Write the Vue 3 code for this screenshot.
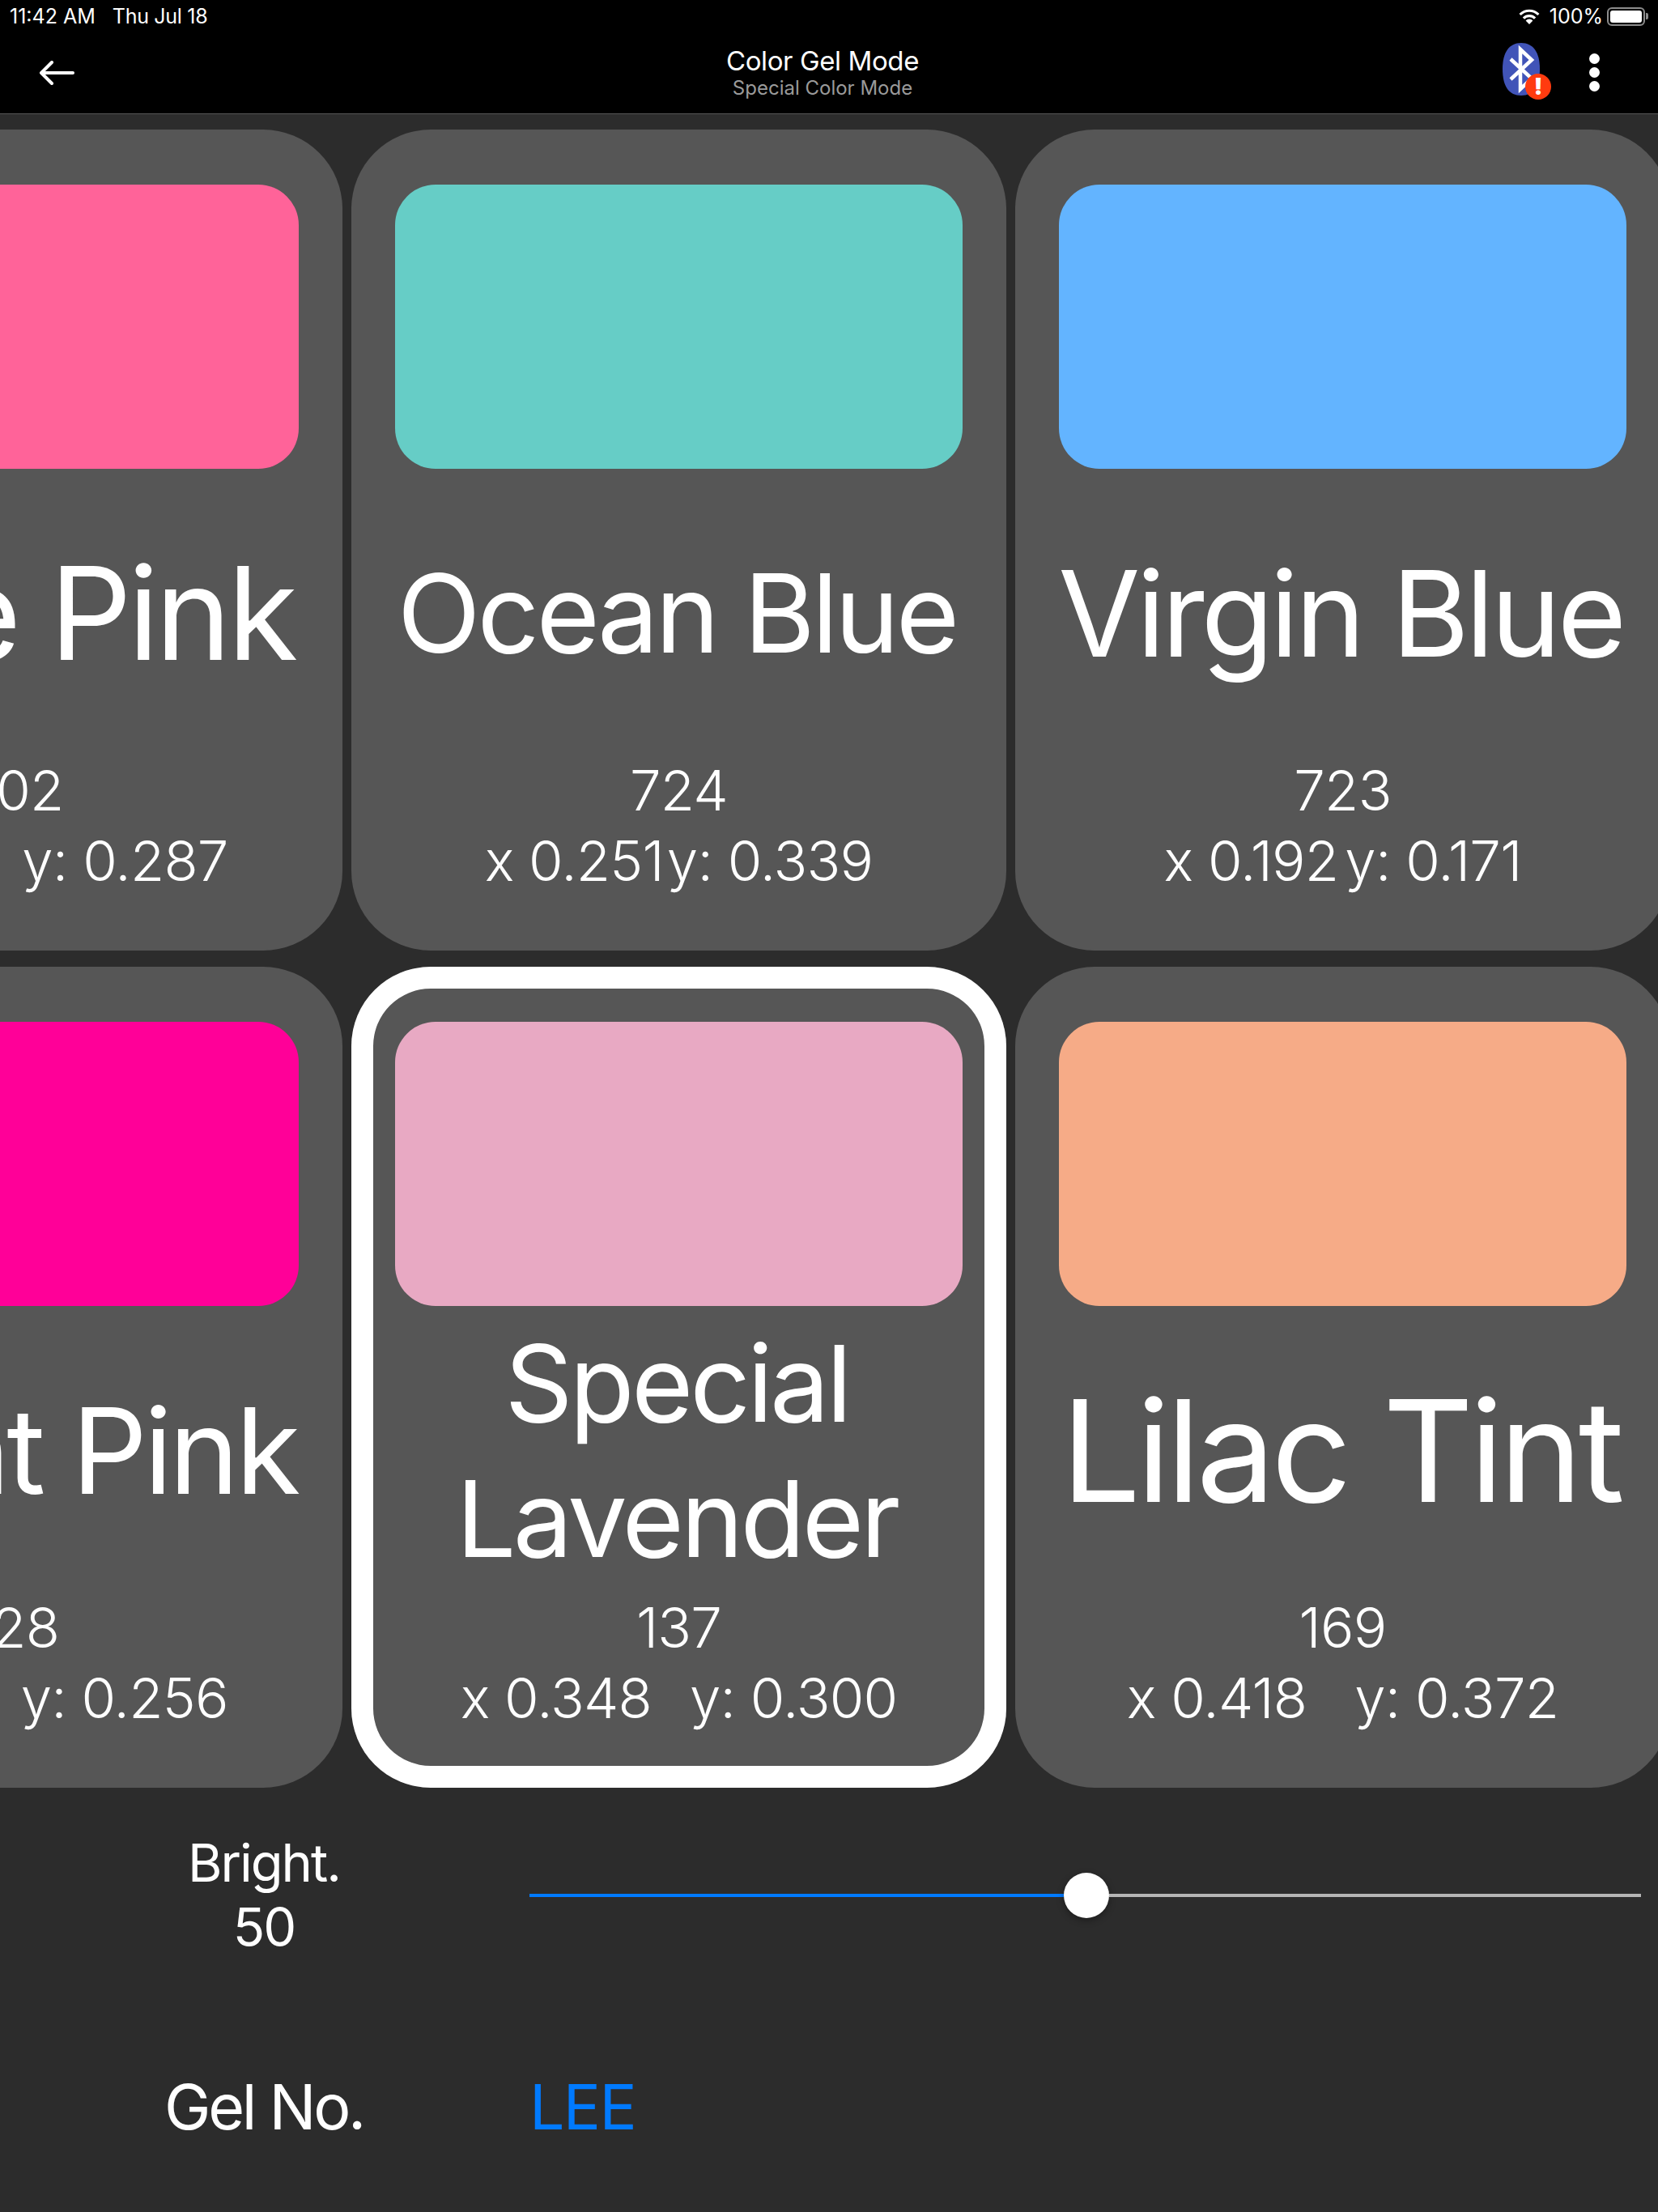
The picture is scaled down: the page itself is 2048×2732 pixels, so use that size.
<template>
  <div class="page">
    <div class="status-bar">
      <div class="status-left"><span>11:42 AM</span><span class="date">Thu Jul 18</span></div>
      <div class="status-right">
        <svg class="wifi" width="30" height="22" viewBox="0 0 30 22">
          <path d="M15 21l-4.4-4.6a6.2 6.2 0 0 1 8.8 0z" fill="#fff" />
          <path d="M7.9 13.6a10 10 0 0 1 14.2 0" fill="none" stroke="#fff" stroke-width="3.2" />
          <path d="M3.6 9a16 16 0 0 1 22.8 0" fill="none" stroke="#fff" stroke-width="3.2" />
        </svg>
        <span class="level">100%</span>
        <div class="battery"><div class="battery-fill"></div></div>
        <div class="battery-nub"></div>
      </div>
    </div>

    <header class="nav">
      <button type="button" class="back" aria-label="Back">
        <svg width="44" height="30" viewBox="0 0 44 30">
          <path d="M42 15H3M16 2L3 15l13 13" fill="none" stroke="#fff" stroke-width="4" stroke-linecap="round" stroke-linejoin="round" />
        </svg>
      </button>
      <div class="title">
        <div class="title-main">Color Gel Mode</div>
        <div class="title-sub">Special Color Mode</div>
      </div>
      <div class="actions">
        <div class="bt">
          <svg width="62" height="68" viewBox="0 0 62 68">
            <path d="M23 0C38 0 46 12 46 32 46 54 38 65 23 65 8 65 0 54 0 32 0 12 8 0 23 0z" fill="#4154b8" />
            <path d="M10 20L36 44 22 57V8L36 21 10 45" fill="none" stroke="#fff" stroke-width="4.5" />
          </svg>
          <div class="bt-badge">!</div>
        </div>
        <div class="dots"><i></i><i></i><i></i></div>
      </div>
    </header>

    <main class="grid">
      <div v-for="gel in gels" :key="gel.name" class="card" :class="{ selected: gel.selected }">
        <div class="swatch" :style="{ background: gel.color }"></div>
        <div class="name" :style="{ fontSize: gel.size + 'px' }">
          <div v-for="line in gel.name.split('|')" :key="line">{{ line }}</div>
        </div>
        <div class="info">
          <div>{{ gel.no }}</div>
          <div class="coords" :style="{ gap: gel.gap + 'px' }"><span>x {{ gel.x }}</span><span>y: {{ gel.y }}</span></div>
        </div>
      </div>
    </main>

    <section class="controls">
      <div class="row bright">
        <div class="label small">Bright.<br />50</div>
        <div class="slider">
          <div class="track-on"></div>
          <div class="thumb"></div>
          <div class="track-off"></div>
        </div>
      </div>
      <div class="row gel-no">
        <div class="label">Gel No.</div>
        <div class="lee">LEE</div>
      </div>
    </section>
  </div>
</template>

<script setup>
const gels = [
  { name: 'Rose Pink', size: 159, no: '702', x: '0.442', y: '0.287', color: '#ff6399', gap: 32 },
  { name: 'Ocean Blue', size: 134.5, no: '724', x: '0.251', y: '0.339', color: '#66cdc6', gap: 4 },
  { name: 'Virgin Blue', size: 146.5, no: '723', x: '0.192', y: '0.171', color: '#63b4ff', gap: 8 },
  { name: 'Bright Pink', size: 146.5, no: '128', x: '0.460', y: '0.256', color: '#ff0098', gap: 32 },
  { name: 'Special|Lavender', size: 131, no: '137', x: '0.348', y: '0.300', color: '#e8a9c3', gap: 47, selected: true },
  { name: 'Lilac Tint', size: 174, no: '169', x: '0.418', y: '0.372', color: '#f6ab87', gap: 59 }
];
</script>

<style>
html, body {
  margin: 0;
  background: #2c2c2c;
}
</style>

<style scoped>
.page {
  width: 2048px;
  height: 2732px;
  overflow: hidden;
  background: #2c2c2c;
  color: #fff;
  font-family: Inter, "Liberation Sans", sans-serif;
}
.status-bar {
  height: 40px;
  background: #000;
  display: flex;
  justify-content: space-between;
  align-items: center;
  padding: 0 12px 0 12px;
  font-size: 25px;
}
.status-left {
  display: flex;
  gap: 21px;
}
.date {
  letter-spacing: -0.3px;
}
.status-right {
  display: flex;
  align-items: center;
  gap: 8px;
}
.level {
  margin-right: -3px;
}
.wifi {
  margin-right: 2px;
}
.battery {
  width: 47px;
  height: 23px;
  box-sizing: border-box;
  border: 2px solid #8c8c8c;
  border-radius: 6px;
  padding: 2px;
}
.battery-fill {
  height: 100%;
  background: #fff;
  border-radius: 3px;
}
.battery-nub {
  width: 3px;
  height: 8px;
  margin-left: -7px;
  background: #8c8c8c;
  border-radius: 0 2px 2px 0;
}
.nav {
  height: 100px;
  background: #000;
  border-bottom: 1px solid #555;
  display: flex;
  align-items: center;
}
.back {
  width: 176px;
  padding: 0 0 0 48px;
  background: none;
  border: 0;
  text-align: left;
  display: flex;
}
.title {
  flex: 1;
  text-align: center;
  margin-top: -2px;
}
.title-main {
  font-size: 33px;
  line-height: 40px;
  letter-spacing: -0.4px;
}
.title-sub {
  font-size: 24px;
  line-height: 28px;
  color: #9a9a9a;
}
.actions {
  width: 192px;
  display: flex;
  align-items: center;
}
.bt {
  position: relative;
  display: flex;
  margin-top: -6px;
}
.bt-badge {
  position: absolute;
  left: 28px;
  top: 38px;
  width: 32px;
  height: 32px;
  border-radius: 50%;
  background: #ff3b0f;
  font-size: 28px;
  font-weight: 900;
  line-height: 32px;
  text-align: center;
}
.dots {
  margin-left: 45px;
  display: flex;
  flex-direction: column;
  gap: 4px;
  margin-top: -2px;
}
.dots i {
  width: 13px;
  height: 13px;
  border-radius: 50%;
  background: #fff;
}
.grid {
  display: grid;
  grid-template-columns: repeat(3, 809px);
  grid-auto-rows: 1014px;
  gap: 20px 11px;
  margin: 19px 0 0 -386px;
}
.card {
  background: #565656;
  border-radius: 98px;
  padding: 68px 54px 67px;
  box-sizing: border-box;
  display: flex;
  flex-direction: column;
  text-align: center;
}
.card.selected {
  box-shadow: inset 0 0 0 27px #fff;
}
.swatch {
  height: 351px;
  flex: none;
  border-radius: 50px;
}
.name {
  flex: 1;
  display: flex;
  flex-direction: column;
  justify-content: center;
  white-space: nowrap;
  align-items: center;
  line-height: 167px;
  letter-spacing: -0.03em;
  padding: 3px 5px 0 0;
}
.info {
  font-size: 69px;
  line-height: 87px;
  letter-spacing: -0.8px;
  font-weight: 300;
}
.coords {
  display: flex;
  justify-content: center;
  white-space: nowrap;
}
.controls {
  display: flex;
  flex-direction: column;
}
.row {
  display: grid;
  grid-template-columns: 654px 1fr;
  align-items: center;
}
.bright {
  margin-top: 54px;
  padding-right: 21px;
}
.gel-no {
  margin-top: 136px;
}
.label {
  text-align: center;
  font-size: 77px;
  letter-spacing: -3.3px;
  padding-right: 2px;
}
.label.small {
  font-size: 65px;
  line-height: 79px;
  letter-spacing: -2px;
  margin-top: -1px;
}
.slider {
  display: flex;
  align-items: center;
}
.track-on {
  width: 660px;
  height: 4px;
  background: #007aff;
}
.track-off {
  flex: 1;
  height: 4px;
  background: #b5b5b5;
}
.thumb {
  width: 56px;
  height: 56px;
  flex: none;
  border-radius: 50%;
  background: #fff;
  box-shadow: 0 3px 8px rgba(0, 0, 0, 0.35);
}
.lee {
  font-size: 77px;
  letter-spacing: -1.7px;
  color: #007aff;
}
</style>
